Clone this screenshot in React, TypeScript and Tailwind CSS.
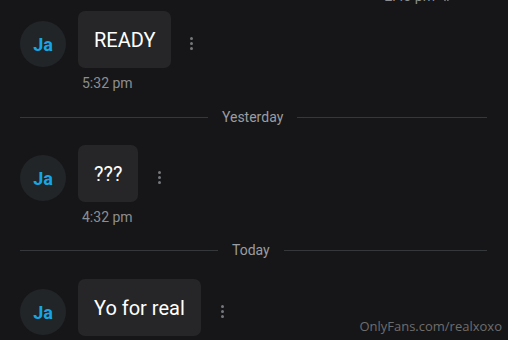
import React from "react";

const Dots = () => (
  <div className="flex flex-col gap-[2px]">
    <span className="w-[3px] h-[3px] rounded-full bg-[#74777b]" />
    <span className="w-[3px] h-[3px] rounded-full bg-[#74777b]" />
    <span className="w-[3px] h-[3px] rounded-full bg-[#74777b]" />
  </div>
);

const Message = ({ text, time, dotsGap }: { text: string; time?: string; dotsGap: string }) => (
  <div className="flex flex-col">
    <div className="flex items-start">
      <div className="mt-[10px] w-[46px] h-[46px] rounded-full bg-[#212528] flex items-center justify-center text-[#16a5e6] font-bold text-[18px]">
        Ja
      </div>
      <div className="ml-[12px] h-[57px] px-[16px] rounded-[7px] bg-[#262628] flex items-center text-white text-[20px]">
        {text}
      </div>
      <div className={`mt-[26px] ${dotsGap}`}>
        <Dots />
      </div>
    </div>
    {time && (
      <div className="ml-[62px] mt-[5px] text-[14px] leading-[20px] text-[#8b8e92]">
        {time}
      </div>
    )}
  </div>
);

const Divider = ({ label, left, right }: { label: string; left: string; right: string }) => (
  <div className="flex items-center pr-[1px]">
    <div className={`h-px bg-[#35383b] ${left}`} />
    <div className="px-[14px] text-[14px] leading-[20px] text-[#9a9da1]">{label}</div>
    <div className={`h-px bg-[#35383b] ${right}`} />
  </div>
);

export default function App() {
  return (
    <div
      className="relative w-[508px] h-[340px] overflow-hidden bg-[#161618] px-[20px]"
      style={{ fontFamily: "Roboto, 'Liberation Sans', sans-serif" }}
    >
      <div className="-mt-[12px] h-[17px] flex items-center justify-end pr-[33px] gap-[6px] text-[14px] text-[#8b8e92]">
        <span>2:43 pm</span>
        <svg width="14" height="10" viewBox="0 0 14 10" fill="none" stroke="#8b8e92" strokeWidth="1.6">
          <path d="M1 5l3 3 5-6" />
          <path d="M6 8l1 0 6-6" />
        </svg>
      </div>
      <div className="mt-[6px]">
        <Message text="READY" time="5:32 pm" dotsGap="ml-[19px]" />
      </div>
      <div className="mt-[14px]">
        <Divider label="Yesterday" left="w-[188px]" right="flex-1" />
      </div>
      <div className="mt-[18px]">
        <Message text="???" time="4:32 pm" dotsGap="ml-[20px]" />
      </div>
      <div className="mt-[13px]">
        <Divider label="Today" left="w-[198px]" right="flex-1" />
      </div>
      <div className="mt-[19px]">
        <Message text="Yo for real" dotsGap="ml-[20px]" />
      </div>
      <div
        className="absolute right-[6px] bottom-[4px] text-[13px] text-[#6d6d6e]"
        style={{ fontFamily: "'Open Sans', sans-serif" }}
      >
        OnlyFans.com/realxoxo
      </div>
    </div>
  );
}
